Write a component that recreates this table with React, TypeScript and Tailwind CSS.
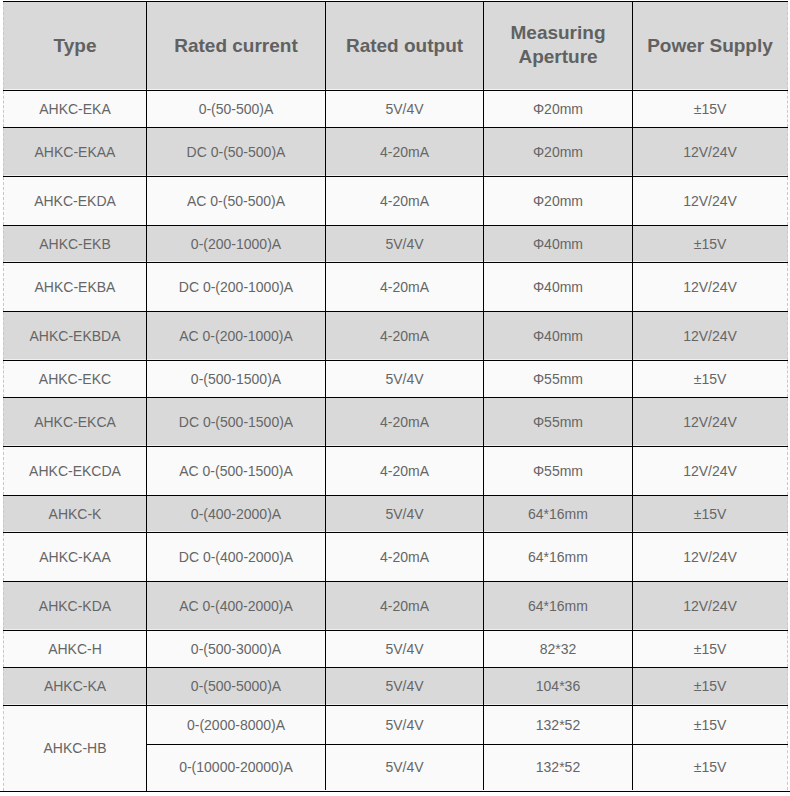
const rows = [
  { type: "AHKC-EKA", current: "0-(50-500)A", output: "5V/4V", aperture: "Φ20mm", power: "±15V", h: "h-[37px]", gray: false },
  { type: "AHKC-EKAA", current: "DC 0-(50-500)A", output: "4-20mA", aperture: "Φ20mm", power: "12V/24V", h: "h-[49px]", gray: true },
  { type: "AHKC-EKDA", current: "AC 0-(50-500)A", output: "4-20mA", aperture: "Φ20mm", power: "12V/24V", h: "h-[49px]", gray: false },
  { type: "AHKC-EKB", current: "0-(200-1000)A", output: "5V/4V", aperture: "Φ40mm", power: "±15V", h: "h-[37px]", gray: true },
  { type: "AHKC-EKBA", current: "DC 0-(200-1000)A", output: "4-20mA", aperture: "Φ40mm", power: "12V/24V", h: "h-[49px]", gray: false },
  { type: "AHKC-EKBDA", current: "AC 0-(200-1000)A", output: "4-20mA", aperture: "Φ40mm", power: "12V/24V", h: "h-[49px]", gray: true },
  { type: "AHKC-EKC", current: "0-(500-1500)A", output: "5V/4V", aperture: "Φ55mm", power: "±15V", h: "h-[37px]", gray: false },
  { type: "AHKC-EKCA", current: "DC 0-(500-1500)A", output: "4-20mA", aperture: "Φ55mm", power: "12V/24V", h: "h-[49px]", gray: true },
  { type: "AHKC-EKCDA", current: "AC 0-(500-1500)A", output: "4-20mA", aperture: "Φ55mm", power: "12V/24V", h: "h-[49px]", gray: false },
  { type: "AHKC-K", current: "0-(400-2000)A", output: "5V/4V", aperture: "64*16mm", power: "±15V", h: "h-[37px]", gray: true },
  { type: "AHKC-KAA", current: "DC 0-(400-2000)A", output: "4-20mA", aperture: "64*16mm", power: "12V/24V", h: "h-[49px]", gray: false },
  { type: "AHKC-KDA", current: "AC 0-(400-2000)A", output: "4-20mA", aperture: "64*16mm", power: "12V/24V", h: "h-[49px]", gray: true },
  { type: "AHKC-H", current: "0-(500-3000)A", output: "5V/4V", aperture: "82*32", power: "±15V", h: "h-[37px]", gray: false },
  { type: "AHKC-KA", current: "0-(500-5000)A", output: "5V/4V", aperture: "104*36", power: "±15V", h: "h-[38px]", gray: true },
]

const hbRows = [
  { current: "0-(2000-8000)A", output: "5V/4V", aperture: "132*52", power: "±15V", h: "h-[39px] border-b border-black" },
  { current: "0-(10000-20000)A", output: "5V/4V", aperture: "132*52", power: "±15V", h: "h-[45px]" },
]

// column widths incl. their right border; outer edges are dashed grey
const c1 = "w-[144px] border-l border-r border-solid [border-left-style:dashed] border-l-[#c8c8c8] border-r-black"
const c2 = "w-[179px] border-r border-black"
const c3 = "w-[158px] border-r border-black"
const c4 = "w-[149px] border-r border-black"
const c5 = "w-[155px] border-r border-dashed border-r-[#c8c8c8]"

const cell = "flex items-center justify-center text-center shrink-0 h-full"

export default function App() {
  return (
    <div
      className="w-[790px] h-[796px] bg-white text-[14px] text-[#666]"
      style={{ fontFamily: '"Liberation Sans", Arial, sans-serif' }}
    >
      <div className="pl-[3px] pt-[1px]">
        <div className="w-[785px] border-t border-black">
          {/* Header */}
          <div className="flex h-[89px] border-b border-black bg-[#d9d9d9] shadow-[inset_0_-1px_0_#f4f4f4] text-[19px] font-bold leading-[24px] text-[#616161]">
            <div className={`${cell} ${c1}`}>Type</div>
            <div className={`${cell} ${c2}`}>Rated current</div>
            <div className={`${cell} ${c3}`}>Rated output</div>
            <div className={`${cell} ${c4} pb-[2px]`}>Measuring<br />Aperture</div>
            <div className={`${cell} ${c5}`}>Power Supply</div>
          </div>

          {rows.map((r) => (
            <div
              key={r.type}
              className={`flex ${r.h} border-b border-black ${
                r.gray ? "bg-[#d9d9d9] shadow-[inset_0_-1px_0_#efefef]" : "bg-[#fafafa]"
              }`}
            >
              <div className={`${cell} ${c1}`}>{r.type}</div>
              <div className={`${cell} ${c2}`}>{r.current}</div>
              <div className={`${cell} ${c3}`}>{r.output}</div>
              <div className={`${cell} ${c4}`}>{r.aperture}</div>
              <div className={`${cell} ${c5}`}>{r.power}</div>
            </div>
          ))}

          {/* AHKC-HB spans two rows */}
          <div className="flex h-[85px] bg-[#fafafa]">
            <div className={`${cell} ${c1}`}>AHKC-HB</div>
            <div className="flex flex-col">
              {hbRows.map((r, i) => (
                <div key={i} className={`flex ${r.h}`}>
                  <div className={`${cell} ${c2}`}>{r.current}</div>
                  <div className={`${cell} ${c3}`}>{r.output}</div>
                  <div className={`${cell} ${c4}`}>{r.aperture}</div>
                  <div className={`${cell} ${c5}`}>{r.power}</div>
                </div>
              ))}
            </div>
          </div>
        </div>
      </div>
      <div className="w-[790px] h-px bg-black" />
    </div>
  )
}
